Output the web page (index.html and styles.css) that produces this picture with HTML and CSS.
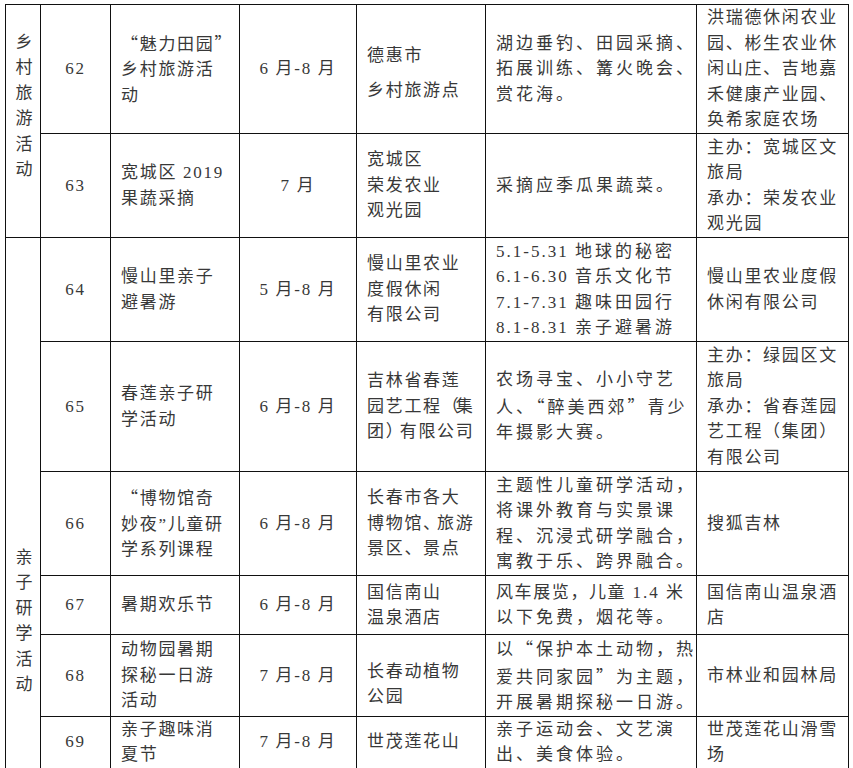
FILE: index.html
```html
<!DOCTYPE html>
<html lang="zh-CN">
<head>
<meta charset="utf-8">
<title>活动一览表</title>
<link rel="stylesheet" href="styles.css">
</head>
<body>
<table class="sheet">
  <colgroup>
    <col class="c-grp"><col class="c-no"><col class="c-name"><col class="c-date"><col class="c-place"><col class="c-act"><col class="c-org">
  </colgroup>
  <tbody>
    <tr class="r62">
      <td class="grp g1" rowspan="2"><span>乡村旅游活动</span></td>
      <td class="no">62</td>
      <td class="txt"><span class="q">“</span>魅力田园<span class="q">”</span><br>乡村旅游活<br>动</td>
      <td class="date">6 月-8 月</td>
      <td class="txt p62"><span class="sp">德惠市</span>乡村旅游点</td>
      <td class="txt act">湖边垂钓、田园采摘、<br>拓展训练、篝火晚会、<br>赏花海。</td>
      <td class="txt">洪瑞德休闲农业<br>园、彬生农业休<br>闲山庄、吉地嘉<br>禾健康产业园、<br>奂希家庭农场</td>
    </tr>
    <tr class="r63">
      <td class="no">63</td>
      <td class="txt">宽城区 2019<br>果蔬采摘</td>
      <td class="date">7 月</td>
      <td class="txt">宽城区<br>荣发农业<br>观光园</td>
      <td class="txt act">采摘应季瓜果蔬菜。</td>
      <td class="txt">主办：宽城区文<br>旅局<br>承办：荣发农业<br>观光园</td>
    </tr>
    <tr class="r64">
      <td class="grp g2" rowspan="7"><span>亲子研学活动</span></td>
      <td class="no">64</td>
      <td class="txt">慢山里亲子<br>避暑游</td>
      <td class="date">5 月-8 月</td>
      <td class="txt">慢山里农业<br>度假休闲<br>有限公司</td>
      <td class="txt act"><span class="d">5.1-5.31 </span>地球的秘密<br><span class="d">6.1-6.30 </span>音乐文化节<br><span class="d">7.1-7.31 </span>趣味田园行<br><span class="d">8.1-8.31 </span>亲子避暑游</td>
      <td class="txt">慢山里农业度假<br>休闲有限公司</td>
    </tr>
    <tr class="r65">
      <td class="no">65</td>
      <td class="txt">春莲亲子研<br>学活动</td>
      <td class="date">6 月-8 月</td>
      <td class="txt">吉林省春莲<br>园艺工程<span class="cp">（</span>集<br>团<span class="cp">）</span>有限公司</td>
      <td class="txt act">农场寻宝、小小守艺<br>人、<span class="q">“</span>醉美西郊<span class="q">”</span>青少<br>年摄影大赛。</td>
      <td class="txt">主办：绿园区文<br>旅局<br>承办：省春莲园<br>艺工程（集团）<br>有限公司</td>
    </tr>
    <tr class="r66">
      <td class="no">66</td>
      <td class="txt"><span class="q">“</span>博物馆奇<br>妙夜”儿童研<br>学系列课程</td>
      <td class="date">6 月-8 月</td>
      <td class="txt">长春市各大<br>博物馆<span class="cp">、</span>旅游<br>景区、景点</td>
      <td class="txt act">主题性儿童研学活动，<br>将课外教育与实景课<br>程、沉浸式研学融合，<br>寓教于乐、跨界融合。</td>
      <td class="txt">搜狐吉林</td>
    </tr>
    <tr class="r67">
      <td class="no">67</td>
      <td class="txt">暑期欢乐节</td>
      <td class="date">6 月-8 月</td>
      <td class="txt">国信南山<br>温泉酒店</td>
      <td class="txt act"><span class="tight">风车展览，儿童<span class="d"> 1.4 </span>米</span><br>以下免费，烟花等。</td>
      <td class="txt">国信南山温泉酒<br>店</td>
    </tr>
    <tr class="r68">
      <td class="no">68</td>
      <td class="txt">动物园暑期<br>探秘一日游<br>活动</td>
      <td class="date">7 月-8 月</td>
      <td class="txt p68">长春动植物<br>公园</td>
      <td class="txt act">以<span class="q">“</span>保护本土动物，热<br>爱共同家园<span class="q">”</span>为主题，<br>开展暑期探秘一日游。</td>
      <td class="txt">市林业和园林局</td>
    </tr>
    <tr class="r69">
      <td class="no">69</td>
      <td class="txt">亲子趣味消<br>夏节</td>
      <td class="date">7 月-8 月</td>
      <td class="txt">世茂莲花山</td>
      <td class="txt act">亲子运动会、文艺演<br>出、美食体验。</td>
      <td class="txt">世茂莲花山滑雪<br>场</td>
    </tr>
    <tr class="r70">
      <td class="no"></td>
      <td class="txt"></td>
      <td class="date"></td>
      <td class="txt"></td>
      <td class="txt act"></td>
      <td class="txt"></td>
    </tr>
  </tbody>
</table>
</body>
</html>
```

FILE: styles.css
```css
html {
  overflow: hidden;
}

body {
  margin: 0;
  background: #ffffff;
  font-family: "Liberation Serif", "Noto Sans CJK SC", serif;
  font-size: 17px;
  color: #383838;
}

.sheet {
  border-collapse: collapse;
  table-layout: fixed;
  width: 844px;
  margin: 4px 0 0 5px;
}

.c-grp { width: 35px; }
.c-no { width: 70px; }
.c-name { width: 129px; }
.c-date { width: 117px; }
.c-place { width: 129px; }
.c-act { width: 211px; }
.c-org { width: 152px; }

.sheet td {
  border: 1px solid #111111;
  padding: 0 4px 0 10px;
  line-height: 25.5px;
  vertical-align: middle;
  letter-spacing: 1.7px;
  white-space: nowrap;
  overflow: hidden;
}

.r62 { height: 129px; }
.r63 { height: 104px; }
.r64 { height: 104px; }
.r65 { height: 130px; }
.r66 { height: 104px; }
.r67 { height: 59px; }
.r68 { height: 79px; }
.r69 { height: 50px; }
.r70 { height: 60px; }

.sheet td.no,
.sheet td.date {
  text-align: center;
  padding: 0;
}

.sheet td.act {
  letter-spacing: 3px;
}

.sheet td.act .tight {
  letter-spacing: 1.6px;
}

.sheet td.act .d {
  letter-spacing: 2px;
}

.q {
  font-family: "Noto Sans CJK SC", sans-serif;
}

.cp {
  letter-spacing: -3px;
}

.sp {
  display: block;
  margin-bottom: 10px;
}

.sheet td.p62 {
  padding-top: 8px;
}

.sheet td.p68 {
  padding-top: 18px;
}

.sheet td.grp {
  vertical-align: top;
  text-align: center;
  padding: 0 0 0 2px;
}

.grp span {
  display: inline-block;
  writing-mode: vertical-rl;
  letter-spacing: 8.5px;
  line-height: 1;
  font-family: "Noto Sans CJK SC", sans-serif;
}

.sheet td.g1 {
  padding-top: 28px;
}

.sheet td.g2 {
  padding-top: 310px;
}
```
